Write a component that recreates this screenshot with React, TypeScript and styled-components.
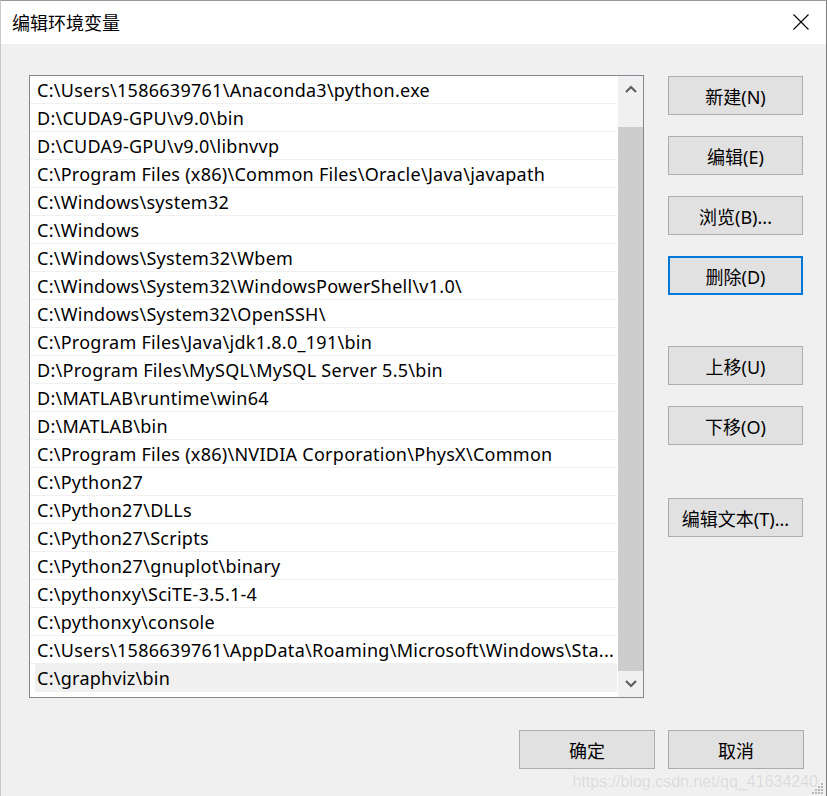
import React from 'react'
import styled, { createGlobalStyle } from 'styled-components'

const GlobalStyle = createGlobalStyle`
  html, body {
    margin: 0;
    padding: 0;
    background: #f0f0f0;
  }
  #root {
    width: 827px;
    height: 796px;
  }
`

const paths = [
  'C:\\Users\\1586639761\\Anaconda3\\python.exe',
  'D:\\CUDA9-GPU\\v9.0\\bin',
  'D:\\CUDA9-GPU\\v9.0\\libnvvp',
  'C:\\Program Files (x86)\\Common Files\\Oracle\\Java\\javapath',
  'C:\\Windows\\system32',
  'C:\\Windows',
  'C:\\Windows\\System32\\Wbem',
  'C:\\Windows\\System32\\WindowsPowerShell\\v1.0\\',
  'C:\\Windows\\System32\\OpenSSH\\',
  'C:\\Program Files\\Java\\jdk1.8.0_191\\bin',
  'D:\\Program Files\\MySQL\\MySQL Server 5.5\\bin',
  'D:\\MATLAB\\runtime\\win64',
  'D:\\MATLAB\\bin',
  'C:\\Program Files (x86)\\NVIDIA Corporation\\PhysX\\Common',
  'C:\\Python27',
  'C:\\Python27\\DLLs',
  'C:\\Python27\\Scripts',
  'C:\\Python27\\gnuplot\\binary',
  'C:\\pythonxy\\SciTE-3.5.1-4',
  'C:\\pythonxy\\console',
  'C:\\Users\\1586639761\\AppData\\Roaming\\Microsoft\\Windows\\Sta...',
  'C:\\graphviz\\bin',
]

const App = () => {
  return (
    <Window>
      <GlobalStyle />
      <TitleBar>
        <Title>编辑环境变量</Title>
        <CloseBtn>
          <svg width="16" height="16" viewBox="0 0 16 16">
            <path d="M0.5 0.5 L15.5 15.5 M15.5 0.5 L0.5 15.5" stroke="#000" strokeWidth="1.1" fill="none" />
          </svg>
        </CloseBtn>
      </TitleBar>
      <Body>
        <Main>
          <ListBox>
            <Rows>
              {paths.map((p, i) => (
                <Row key={i} $selected={i === paths.length - 1}>
                  <RowText>{p}</RowText>
                </Row>
              ))}
            </Rows>
            <ScrollBar>
              <Arrow>
                <svg width="12" height="8" viewBox="0 0 12 8">
                  <path d="M1 7 L6 2 L11 7" stroke="#606060" strokeWidth="2.2" fill="none" />
                </svg>
              </Arrow>
              <Track>
                <Thumb />
              </Track>
              <Arrow>
                <svg width="12" height="8" viewBox="0 0 12 8">
                  <path d="M1 1 L6 6 L11 1" stroke="#606060" strokeWidth="2.2" fill="none" />
                </svg>
              </Arrow>
            </ScrollBar>
          </ListBox>
          <Side>
            <Button>新建(N)</Button>
            <Button>编辑(E)</Button>
            <Button>浏览(B)...</Button>
            <Button $focused>删除(D)</Button>
            <Spacer $h={30} />
            <Button>上移(U)</Button>
            <Button>下移(O)</Button>
            <Spacer $h={32} />
            <Button>编辑文本(T)...</Button>
          </Side>
        </Main>
        <Footer>
          <FooterButton>确定</FooterButton>
          <FooterButton>取消</FooterButton>
        </Footer>
      </Body>
      <Watermark>https://blog.csdn.net/qq_41634240</Watermark>
      <Grip>
        <svg width="12" height="12" viewBox="0 0 12 12">
          {[[9, 1], [6, 4], [9, 4], [3, 7], [6, 7], [9, 7], [0, 10], [3, 10], [6, 10], [9, 10]].map(([x, y], i) => (
            <rect key={i} x={x} y={y} width="2" height="2" fill="#b8b8b8" />
          ))}
        </svg>
      </Grip>
    </Window>
  )
}

const Window = styled.div`
  position: relative;
  width: 827px;
  height: 796px;
  box-sizing: border-box;
  border-top: 1px solid #9a9a9a;
  border-right: 1px solid #7a7a7a;
  border-left: 1px solid #c8c8c8;
  background: #f0f0f0;
  display: flex;
  flex-direction: column;
  overflow: hidden;
  font-family: "Noto Sans", "Noto Sans CJK SC", sans-serif;
`
const TitleBar = styled.div`
  height: 43px;
  background: #fff;
  display: flex;
  align-items: center;
  justify-content: space-between;
  padding: 0 17px 0 11px;
  flex-shrink: 0;
`
const Title = styled.div`
  font-family: "Noto Sans CJK SC", sans-serif;
  font-size: 18px;
  color: #000;
  padding-bottom: 1px;
`
const CloseBtn = styled.div`
  display: flex;
  align-items: center;
  padding-bottom: 1px;
`
const Body = styled.div`
  flex: 1;
  display: flex;
  flex-direction: column;
  padding: 31px 22px 0 28px;
`
const Main = styled.div`
  display: flex;
  gap: 24px;
`
const ListBox = styled.div`
  width: 615px;
  height: 623px;
  box-sizing: border-box;
  border: 1px solid #828790;
  background: #fff;
  display: flex;
`
const Rows = styled.div`
  width: 588px;
  display: flex;
  flex-direction: column;
`
const Row = styled.div<{ $selected?: boolean }>`
  height: 28px;
  box-sizing: border-box;
  border-bottom: 1px solid #f0f0f0;
  background: ${p => (p.$selected ? '#f0f0f0' : '#fff')};
  margin-left: ${p => (p.$selected ? '5px' : '0')};
  padding-left: ${p => (p.$selected ? '2px' : '7px')};
  padding-top: 1px;
  display: flex;
  align-items: center;
  overflow: hidden;
`
const RowText = styled.span`
  font-family: "Noto Sans", sans-serif;
  font-size: 18px;
  color: #000;
  white-space: nowrap;
  overflow: hidden;
  letter-spacing: 0.27px;
`
const ScrollBar = styled.div`
  width: 25px;
  background: #f0f0f0;
  display: flex;
  flex-direction: column;
  margin-left: 1px;
`
const Arrow = styled.div`
  height: 26px;
  display: flex;
  align-items: center;
  justify-content: center;
  flex-shrink: 0;
`
const Track = styled.div`
  flex: 1;
  display: flex;
  flex-direction: column;
  padding: 25px 0 0;
`
const Thumb = styled.div`
  flex: 1;
  background: #cdcdcd;
`
const Side = styled.div`
  display: flex;
  flex-direction: column;
  gap: 21px;
  padding-top: 1px;
`
const Spacer = styled.div<{ $h: number }>`
  height: ${p => p.$h}px;
  margin-top: -21px;
`
const Button = styled.div<{ $focused?: boolean }>`
  width: 135px;
  height: 39px;
  box-sizing: border-box;
  background: #e1e1e1;
  border: ${p => (p.$focused ? '2px solid #0078d7' : '1px solid #adadad')};
  display: flex;
  align-items: center;
  justify-content: center;
  font-family: "Noto Sans", "Noto Sans CJK SC", sans-serif;
  font-size: 18px;
  color: #000;
`
const Footer = styled.div`
  display: flex;
  justify-content: flex-end;
  gap: 13px;
  margin-top: 32px;
`
const FooterButton = styled(Button)`
  width: 136px;
`
const Watermark = styled.div`
  position: absolute;
  right: 8px;
  bottom: 5px;
  font-family: "Liberation Sans", sans-serif;
  font-size: 16px;
  color: #dadada;
  text-shadow: 0 0 1px #fff;
`
const Grip = styled.div`
  position: absolute;
  right: 2px;
  bottom: 2px;
  display: flex;
`

export default App
